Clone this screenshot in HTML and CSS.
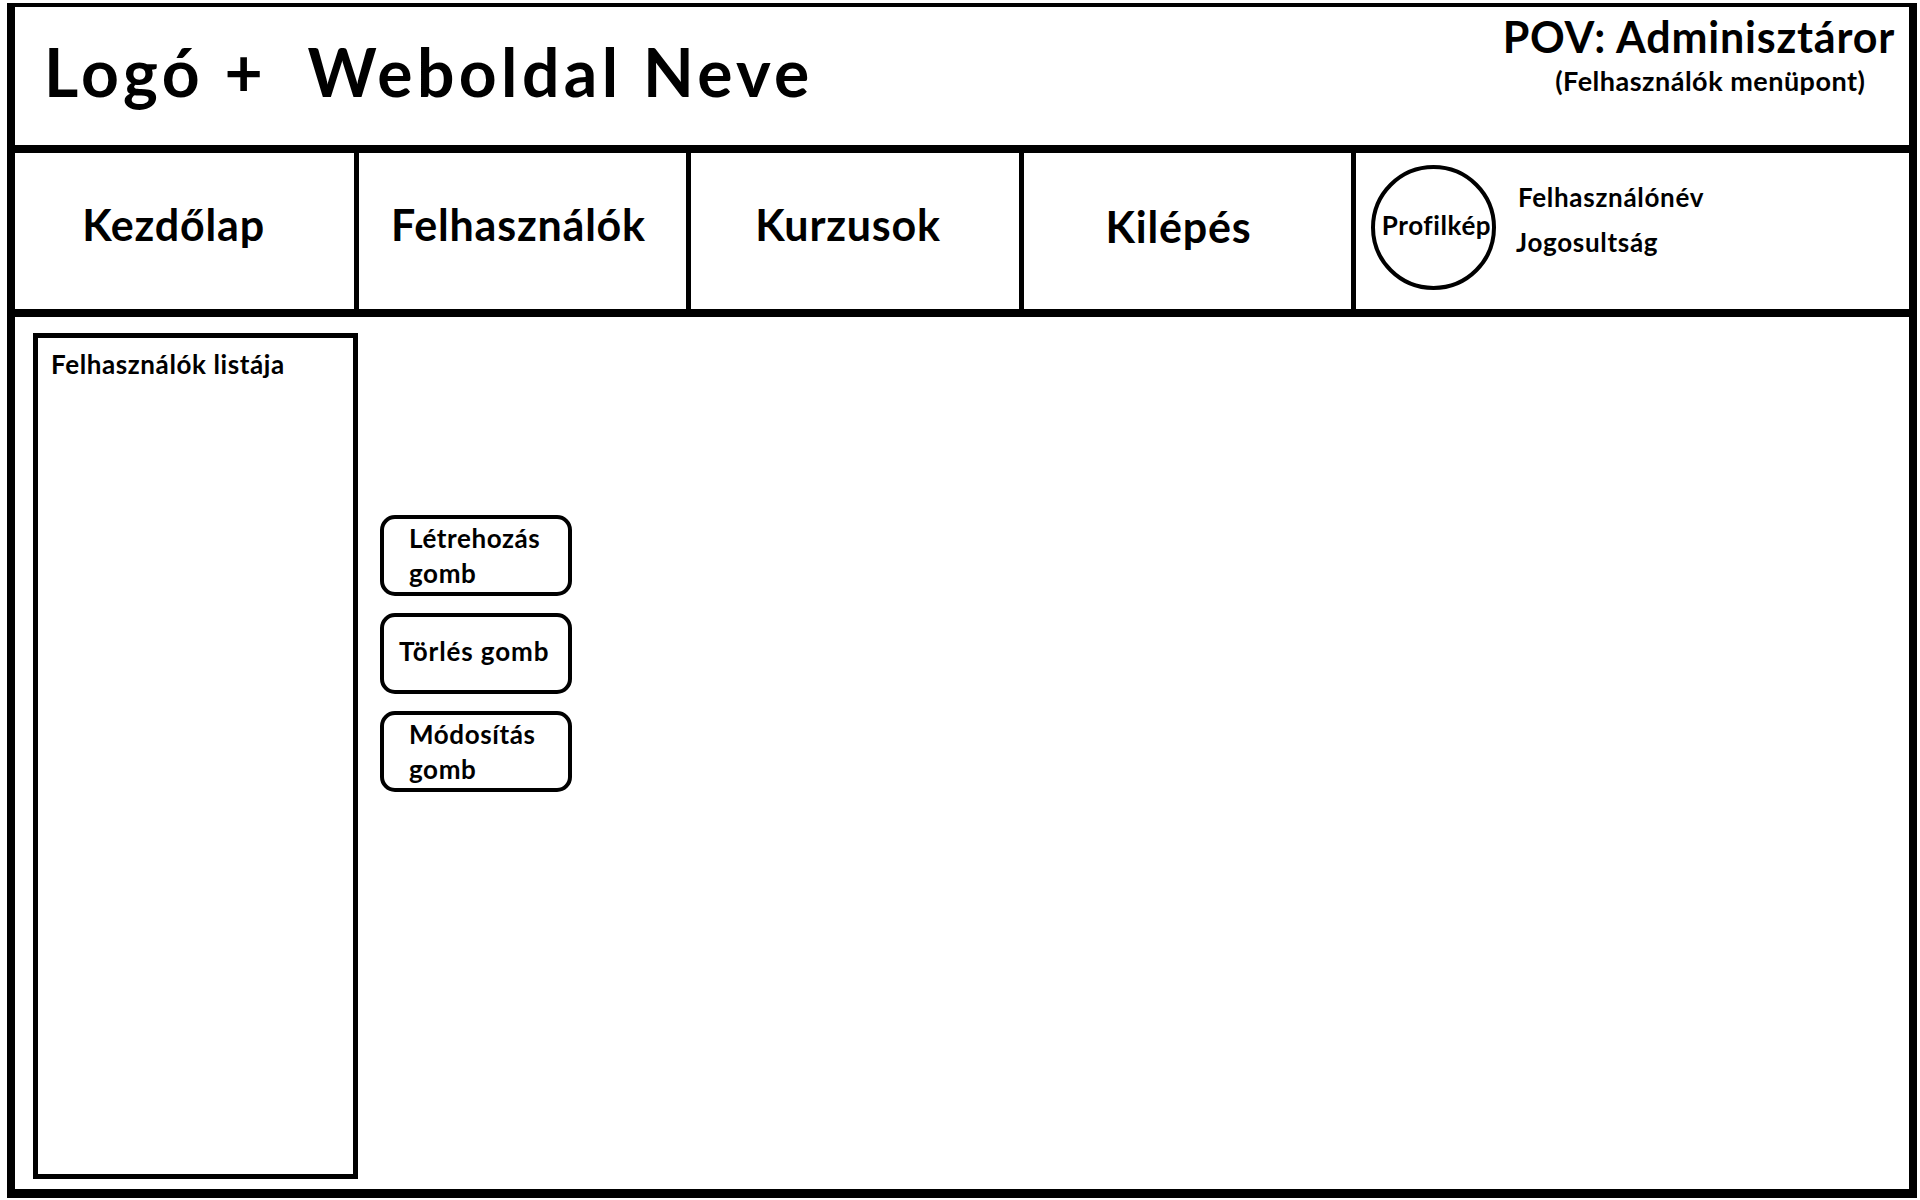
FILE: index.html
```html
<!DOCTYPE html>
<html lang="hu">
<head>
<meta charset="utf-8">
<title>Felhasználók – Adminisztrátor</title>
<link rel="stylesheet" href="styles.css">
</head>
<body>
<div class="frame">
  <header class="header">
    <h1 class="title">Logó +&nbsp; Weboldal Neve</h1>
    <div class="pov">
      <div class="pov-main">POV: Adminisztáror</div>
      <div class="pov-sub">(Felhasználók menüpont)</div>
    </div>
  </header>
  <nav class="nav">
    <div class="nav-cell nav-first"><span>Kezdőlap</span></div>
    <div class="nav-cell nav-second"><span>Felhasználók</span></div>
    <div class="nav-cell nav-third"><span>Kurzusok</span></div>
    <div class="nav-cell nav-fourth"><span>Kilépés</span></div>
    <div class="profile">
      <div class="avatar">Profilkép</div>
      <div class="user-info">
        <div class="user-name">Felhasználónév</div>
        <div class="user-role">Jogosultság</div>
      </div>
    </div>
  </nav>
  <main class="main">
    <section class="list-box">
      <div class="list-title">Felhasználók listája</div>
    </section>
    <div class="buttons">
      <div class="btn btn-create">Létrehozás<br>gomb</div>
      <div class="btn btn-delete">Törlés gomb</div>
      <div class="btn btn-edit">Módosítás<br>gomb</div>
    </div>
  </main>
</div>
</body>
</html>
```

FILE: styles.css
```css
* { box-sizing: border-box; }

html, body {
  margin: 0;
  padding: 0;
  background: #ffffff;
}

body {
  width: 1920px;
  height: 1200px;
  font-family: Lato, "Open Sans", "Noto Sans", sans-serif;
  font-weight: 700;
  color: #000000;
  padding: 3px 3px 2px 7px;
}

.frame {
  width: 1910px;
  height: 1195px;
  border-style: solid;
  border-color: #000;
  border-width: 4px 8px 9px 8px;
  display: flex;
  flex-direction: column;
}

/* Header */
.header {
  height: 146px;
  border-bottom: 8px solid #000;
  display: flex;
  justify-content: space-between;
  align-items: flex-start;
  flex: none;
}

.title {
  margin: 0;
  padding: 32px 0 0 29px;
  font-size: 66px;
  line-height: 1;
  letter-spacing: 4.4px;
  font-weight: 700;
  white-space: pre;
}

.pov {
  padding: 8px 14px 0 0;
  text-align: center;
}

.pov-main {
  font-size: 43px;
  line-height: 1;
  letter-spacing: 0.8px;
}

.pov-sub {
  margin-top: 9px;
  font-size: 27px;
  line-height: 1;
  letter-spacing: 0.5px;
  padding-left: 23px;
}

/* Nav */
.nav {
  height: 164px;
  border-bottom: 8px solid #000;
  display: grid;
  grid-template-columns: 344px 332px 333px 332px 1fr;
  flex: none;
}

.nav-cell {
  border-right: 5px solid #000;
  display: flex;
  align-items: center;
  justify-content: center;
  padding-bottom: 14px;
  font-size: 43px;
  line-height: 1;
  letter-spacing: 0.8px;
}

.nav-first { padding-right: 22px; }
.nav-second { padding-right: 8px; }
.nav-third { padding-right: 14px; }
.nav-fourth { padding-right: 18px; padding-bottom: 10px; }

.profile {
  display: flex;
  align-items: flex-start;
  padding: 12px 0 0 15px;
}

.avatar {
  width: 125px;
  height: 125px;
  border: 4px solid #000;
  border-radius: 50%;
  display: flex;
  align-items: center;
  justify-content: center;
  font-size: 26px;
  line-height: 1;
  letter-spacing: 0.6px;
  padding: 0 0 6px 6px;
  white-space: nowrap;
  flex: none;
}

.user-info {
  margin-left: 22px;
  padding-top: 19px;
  font-size: 26px;
  letter-spacing: 0.7px;
}

.user-name { height: 45px; line-height: 1; }
.user-role { line-height: 1; margin-left: -2px; }

/* Main */
.main {
  flex: 1;
  display: flex;
  align-items: flex-start;
  padding: 16px 0 10px 18px;
}

.list-box {
  width: 325px;
  align-self: stretch;
  border: 5px solid #000;
  padding: 13px 0 0 13px;
  flex: none;
}

.list-title {
  font-size: 26px;
  line-height: 1;
  letter-spacing: 0.6px;
}

.buttons {
  margin-left: 22px;
  margin-top: 182px;
  display: flex;
  flex-direction: column;
  gap: 17px;
}

.btn {
  width: 192px;
  height: 81px;
  border: 4px solid #000;
  border-radius: 15px;
  display: flex;
  flex-direction: column;
  justify-content: center;
  padding-left: 25px;
  font-size: 26px;
  line-height: 35px;
  letter-spacing: 0.6px;
}

.btn-delete {
  padding-left: 15px;
  padding-bottom: 4px;
  letter-spacing: 0.9px;
}
```
